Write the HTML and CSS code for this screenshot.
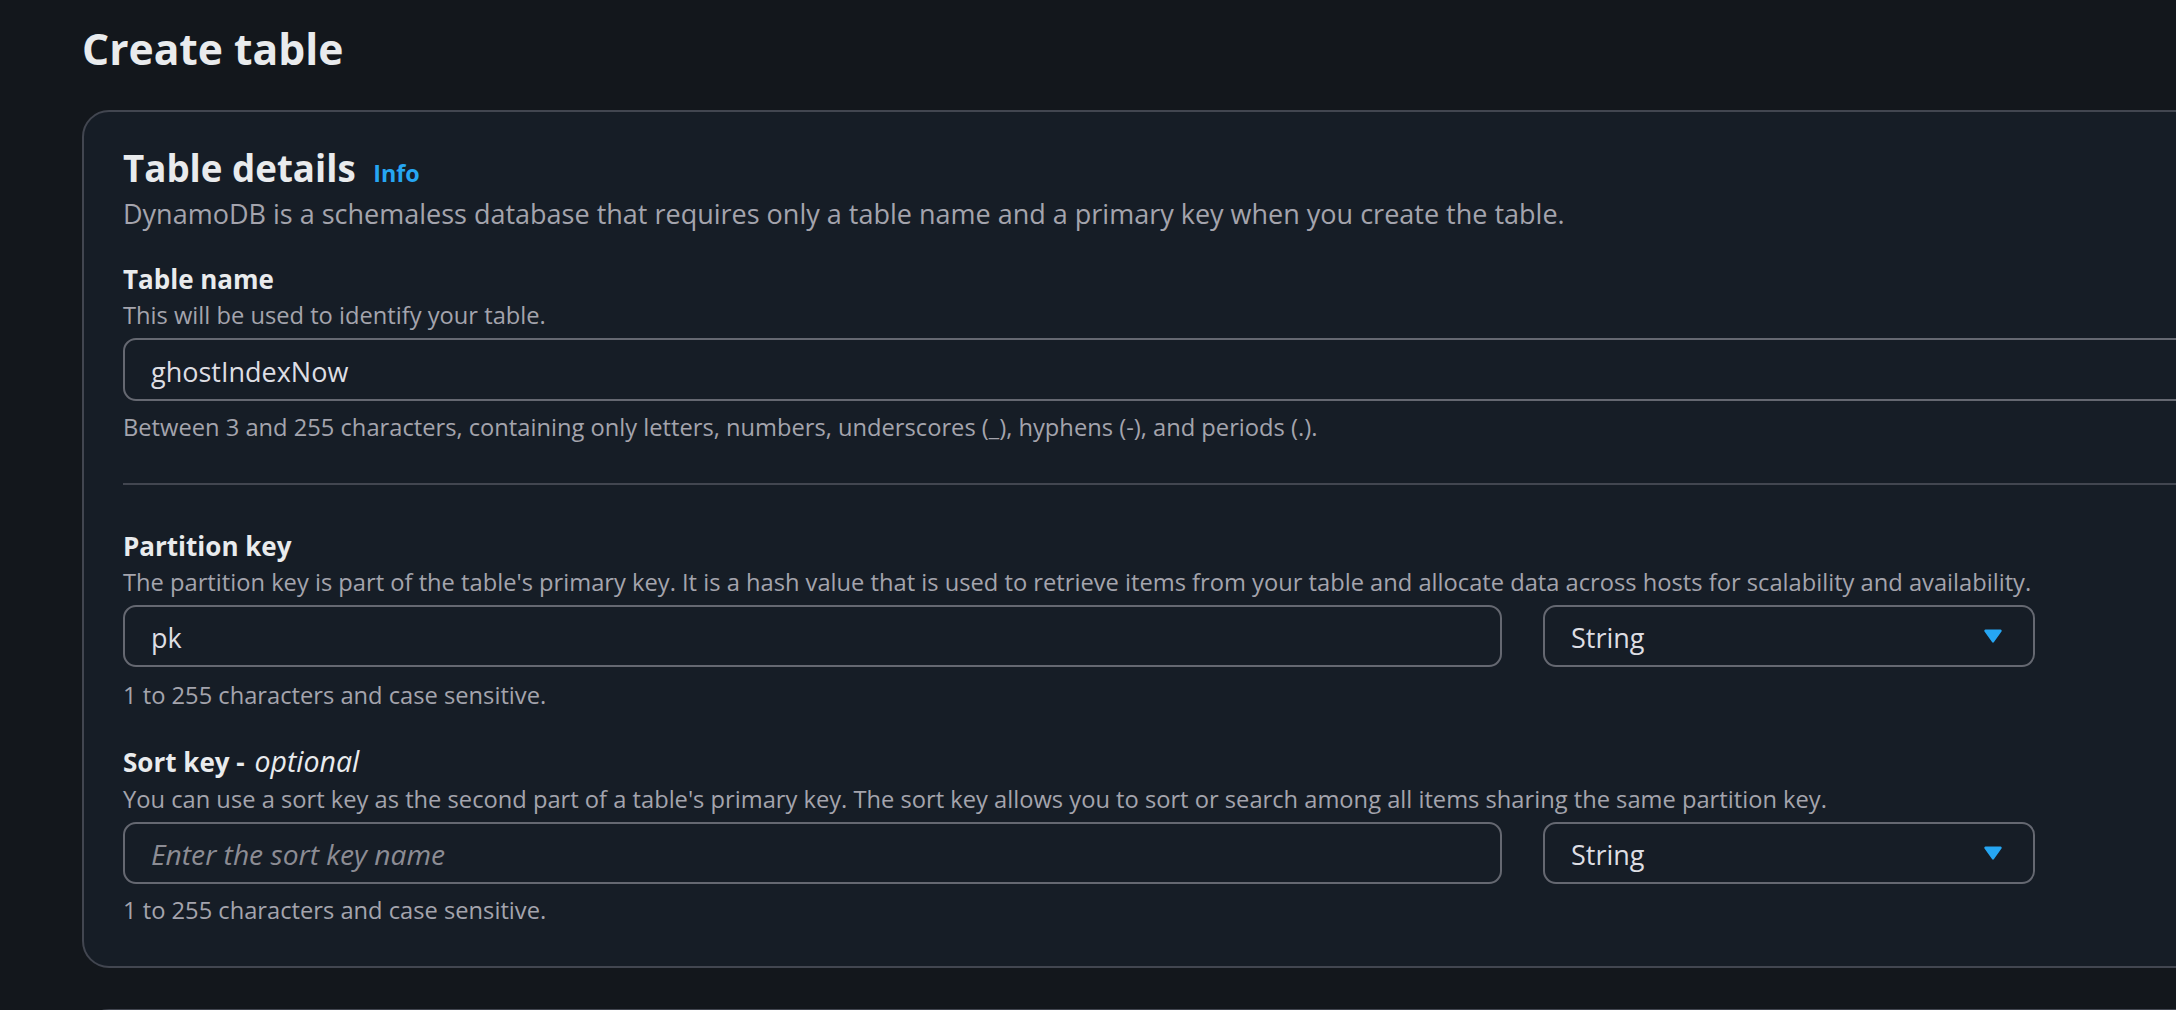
FILE: index.html
```html
<!DOCTYPE html>
<html lang="en">
<head>
    <meta charset="UTF-8">
    <meta name="viewport" content="width=device-width, initial-scale=1.0">
    <title>Create table</title>
    <link rel="stylesheet" href="styles.css">
</head>
<body>
    <main class="page">
        <h1 class="page-title">Create table</h1>

        <section class="card">
            <header class="card-header">
                <h2 class="card-title">Table details <a class="info-link" href="#">Info</a></h2>
                <p class="card-desc">DynamoDB is a schemaless database that requires only a table name and a primary key when you create the table.</p>
            </header>

            <div class="field field-first">
                <label class="field-label" for="table_name">Table name</label>
                <p class="field-desc">This will be used to identify your table.</p>
                <input class="text-input wide" type="text" id="table_name" value="ghostIndexNow">
                <p class="field-hint">Between 3 and 255 characters, containing only letters, numbers, underscores (_), hyphens (-), and periods (.).</p>
            </div>

            <hr class="divider">

            <div class="field field-partition">
                <label class="field-label" for="partition_key">Partition key</label>
                <p class="field-desc">The partition key is part of the table's primary key. It is a hash value that is used to retrieve items from your table and allocate data across hosts for scalability and availability.</p>
                <div class="key-row">
                    <input class="text-input key-input" type="text" id="partition_key" value="pk">
                    <button class="select" type="button">
                        <span>String</span>
                        <svg class="caret" width="20" height="16" viewBox="0 0 20 16"><path d="M2.5 1.5h15a1.2 1.2 0 0 1 1 1.9l-7.5 10.6a1.2 1.2 0 0 1-2 0L1.5 3.4a1.2 1.2 0 0 1 1-1.9z"/></svg>
                    </button>
                </div>
                <p class="field-hint">1 to 255 characters and case sensitive.</p>
            </div>

            <div class="field field-sort">
                <label class="field-label" for="sort_key">Sort key - <i>optional</i></label>
                <p class="field-desc">You can use a sort key as the second part of a table's primary key. The sort key allows you to sort or search among all items sharing the same partition key.</p>
                <div class="key-row">
                    <input class="text-input key-input" type="text" id="sort_key" placeholder="Enter the sort key name">
                    <button class="select" type="button">
                        <span>String</span>
                        <svg class="caret" width="20" height="16" viewBox="0 0 20 16"><path d="M2.5 1.5h15a1.2 1.2 0 0 1 1 1.9l-7.5 10.6a1.2 1.2 0 0 1-2 0L1.5 3.4a1.2 1.2 0 0 1 1-1.9z"/></svg>
                    </button>
                </div>
                <p class="field-hint">1 to 255 characters and case sensitive.</p>
            </div>
        </section>

        <section class="card card-next"></section>
    </main>
</body>
</html>
```

FILE: styles.css
```css
html, body {
    margin: 0;
    padding: 0;
    background-color: #13171c;
    overflow: hidden;
}

body {
    font-family: "Open Sans", "Noto Sans", Arial, sans-serif;
    font-size: 23.7px;
    line-height: 33.3px;
    color: #e9ebed;
}

.page {
    padding: 20px 0 0 82px;
    width: 2400px;
}

.page-title {
    margin: 0;
    font-size: 42.6px;
    line-height: 56.7px;
    font-weight: 700;
    color: #e9ebed;
}

.card {
    margin-top: 33px;
    background-color: #161d26;
    border: 2px solid #424650;
    border-radius: 27px;
    padding: 33px 39px 39px;
}

.card-title {
    margin: 0;
    font-size: 36.7px;
    line-height: 46.7px;
    font-weight: 700;
    color: #e9ebed;
}

.info-link {
    margin-left: 8px;
    font-size: 23.3px;
    line-height: 1;
    font-weight: 700;
    color: #26a6f2;
    text-decoration: none;
}

.card-desc {
    margin: 6px 0 0;
    font-size: 27px;
    color: #a4a4ad;
}

.field-first {
    margin-top: 32px;
}

.field-label {
    display: block;
    font-size: 26px;
    font-weight: 700;
    color: #e9ebed;
}

.field-label i {
    margin-left: 3px;
    font-size: 28.5px;
    font-weight: 400;
}

.field-desc {
    margin: 0;
    padding-top: 3px;
    color: #a4a4ad;
}

.field-hint {
    margin: 10px 0 0;
    color: #a4a4ad;
}

.text-input {
    display: block;
    box-sizing: border-box;
    height: 62px;
    margin-top: 6px;
    padding: 3px 26px 0;
    background-color: #161d26;
    border: 2px solid #656871;
    border-radius: 13px;
    font-family: inherit;
    font-size: 27px;
    color: #dedee3;
    outline: none;
}

.text-input::placeholder {
    color: #8c8c94;
    font-style: italic;
    font-size: 28.2px;
}

.wide {
    width: 100%;
    height: 63px;
}

.divider {
    margin: 38px 0 0;
    border: none;
    height: 2px;
    background-color: #424650;
}

.field-partition {
    margin-top: 45px;
}

.field-sort {
    margin-top: 33px;
}

.key-row {
    display: flex;
    gap: 41px;
    margin-top: 6px;
}

.key-row .text-input {
    margin-top: 0;
}

.key-input {
    width: 1379px;
}

.field-partition .field-hint {
    margin-top: 12px;
}

.select {
    box-sizing: border-box;
    width: 492px;
    height: 62px;
    display: flex;
    align-items: center;
    justify-content: space-between;
    padding: 3px 30px 0 26px;
    background-color: #161d26;
    border: 2px solid #656871;
    border-radius: 13px;
    font-family: inherit;
    font-size: 27px;
    color: #dedee3;
    cursor: pointer;
}

.caret {
    fill: #26a6f2;
    margin-top: -4px;
}

.card-next {
    margin-top: 41px;
    height: 200px;
    padding: 0;
}
```
